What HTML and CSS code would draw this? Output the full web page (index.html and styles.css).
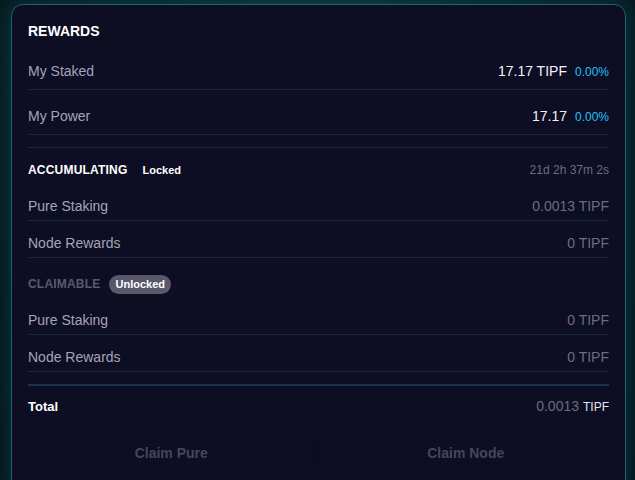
FILE: index.html
```html
<!DOCTYPE html>
<html>
<head>
<meta charset="utf-8">
<link rel="stylesheet" href="styles.css">
</head>
<body>
<div class="card">
  <div class="title">REWARDS</div>
  <div class="row big">
    <span class="label">My Staked</span>
    <span class="val"><span class="white">17.17 TIPF</span><span class="pct">0.00%</span></span>
  </div>
  <div class="row big">
    <span class="label">My Power</span>
    <span class="val"><span class="white">17.17</span><span class="pct">0.00%</span></span>
  </div>

  <div class="section first">
    <div class="shead">
      <div class="sleft"><span class="stitle">ACCUMULATING</span><span class="badge">Locked</span></div>
      <span class="timer">21d 2h 37m 2s</span>
    </div>
    <div class="row">
      <span class="label">Pure Staking</span>
      <span class="val gray">0.0013 TIPF</span>
    </div>
    <div class="row">
      <span class="label">Node Rewards</span>
      <span class="val gray">0 TIPF</span>
    </div>
  </div>

  <div class="section second">
    <div class="shead">
      <div class="sleft"><span class="stitle dim">CLAIMABLE</span><span class="badge pill">Unlocked</span></div>
    </div>
    <div class="row">
      <span class="label">Pure Staking</span>
      <span class="val gray">0 TIPF</span>
    </div>
    <div class="row">
      <span class="label">Node Rewards</span>
      <span class="val gray">0 TIPF</span>
    </div>
  </div>

  <div class="total">
    <span class="ttl">Total</span>
    <span class="val"><span class="gray">0.0013</span><span class="unit">TIPF</span></span>
  </div>

  <div class="buttons">
    <button class="btn">Claim Pure</button>
    <button class="btn">Claim Node</button>
  </div>
</div>
</body>
</html>
```
FILE: styles.css
```css
* { box-sizing: border-box; }
html, body { margin: 0; padding: 0; }
body {
  width: 635px;
  height: 480px;
  overflow: hidden;
  background: radial-gradient(ellipse at 50% 0%, #0b2c34 0%, #071a20 60%, #051317 100%);
  font-family: "Liberation Sans", Arial, sans-serif;
  padding: 4px 0 0 11px;
}
.card {
  width: 615px;
  height: 500px;
  background: #0d0d24;
  border: 1px solid #1a6474;
  border-radius: 12px;
  padding: 16px 16px;
  box-shadow: 0 0 26px rgba(20, 130, 150, 0.35);
}
.title {
  color: #ffffff;
  font-weight: bold;
  font-size: 14px;
  line-height: 20px;
  margin-bottom: 12px;
}
.row {
  display: flex;
  justify-content: space-between;
  align-items: center;
  height: 29px;
  line-height: 16px;
  border-bottom: 1px solid #142a45;
  margin-bottom: 8px;
  font-size: 14px;
}
.row.big { height: 37px; }
.row:last-child { margin-bottom: 0; }
.label { color: #a4a4ba; }
.val { display: flex; align-items: baseline; line-height: 14px; }
.white { color: #f2f2f7; }
.pct { color: #1fc3f2; font-size: 12px; margin-left: 8px; }
.gray { color: #6c6c80; }
.section.first {
  margin-top: 12px;
  border-top: 1px solid #142a45;
  padding-top: 13px;
}
.section.second { margin-top: 17px; }
.shead {
  display: flex;
  justify-content: space-between;
  align-items: center;
  height: 18px;
  margin-bottom: 13px;
}
.sleft { display: flex; align-items: center; gap: 9px; }
.stitle {
  color: #ffffff;
  font-weight: bold;
  font-size: 12px;
  letter-spacing: 0.2px;
}
.stitle.dim { color: #5a5a6e; }
.badge {
  color: #ffffff;
  font-weight: bold;
  font-size: 11px;
  line-height: 15px;
  padding: 2px 6px;
  border-radius: 10px;
}
.badge.pill { background: #58586a; }
.timer { color: #6c6c80; font-size: 12px; }
.total {
  margin-top: 12px;
  border-top: 2px solid #163450;
  display: flex;
  justify-content: space-between;
  align-items: center;
  height: 42px;
}
.ttl { color: #ffffff; font-weight: bold; font-size: 13px; }
.total .gray { font-size: 14px; }
.unit { color: #e6e6ee; font-size: 12px; margin-left: 4px; }
.buttons {
  margin-top: 7px;
  display: grid;
  grid-template-columns: 1fr 1fr;
  gap: 8px;
}
.btn {
  height: 40px;
  font-family: "Liberation Sans", Arial, sans-serif;
  font-weight: bold;
  font-size: 14px;
  color: #46465a;
  background: transparent;
  border: none;
  border-radius: 8px;
  box-shadow: 0 0 4px rgba(0, 0, 0, 0.15);
}
```
